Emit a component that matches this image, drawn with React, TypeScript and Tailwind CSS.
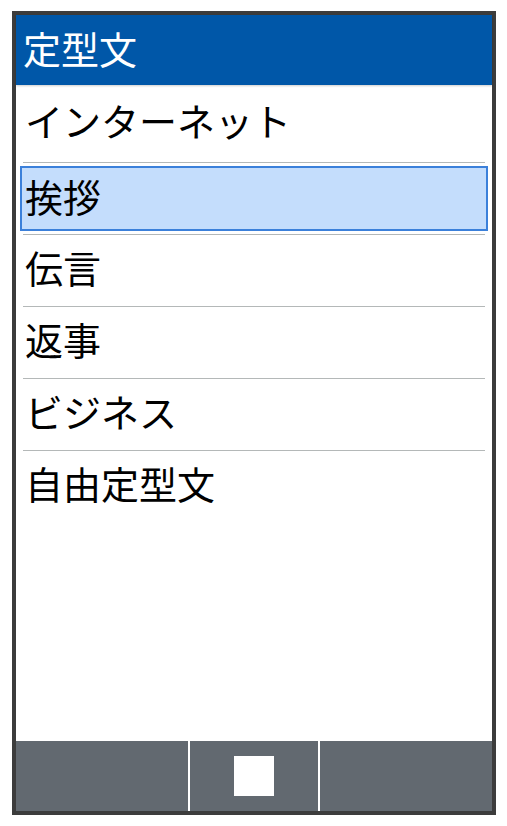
const items = ["インターネット", "挨拶", "伝言", "返事", "ビジネス", "自由定型文"];

export default function App() {
  const selected = 1;
  return (
    <div
      className="w-[507px] h-[826px] bg-white pl-[12px] pt-[11px]"
      style={{ fontFamily: '"Noto Sans CJK JP", "Noto Sans", sans-serif' }}
    >
      <div className="w-[484px] h-[804px] border-4 border-[#3c3c3c] flex flex-col">
        <div className="h-[70px] bg-[#0057a8] flex items-center pl-[7px] pb-[5px] shadow-[0_1px_2px_rgba(0,0,0,0.2)]">
          <span className="text-white text-[38px] leading-none">定型文</span>
        </div>
        <div className="flex-1 flex flex-col">
          {items.map((item, i) => (
            <div key={item} className="flex flex-col">
              <div
                className={`${i === 0 ? "h-[77px]" : "h-[71px]"} flex items-center ${
                  i === selected ? "px-[4px] py-[3px]" : "pb-[7px]"
                }`}
              >
                {i === selected ? (
                  <div className="w-full h-full border-2 border-[#3b80da] bg-[#c4ddfc] flex items-center pl-[3px] pb-[6px]">
                    <span className="text-[38px] leading-none text-black">{item}</span>
                  </div>
                ) : (
                  <span className="text-[38px] leading-none text-black pl-[9px]">{item}</span>
                )}
              </div>
              {i < items.length - 1 && <div className="mx-[7px] h-px bg-[#b4b8b8]" />}
            </div>
          ))}
        </div>
        <div className="h-[70px] bg-[#626970] flex">
          <div className="w-[172px]" />
          <div className="w-[2px] bg-white" />
          <div className="w-[128px] flex items-center justify-center">
            <div className="w-[40px] h-[40px] bg-white" />
          </div>
          <div className="w-[2px] bg-white" />
          <div className="flex-1" />
        </div>
      </div>
    </div>
  );
}
